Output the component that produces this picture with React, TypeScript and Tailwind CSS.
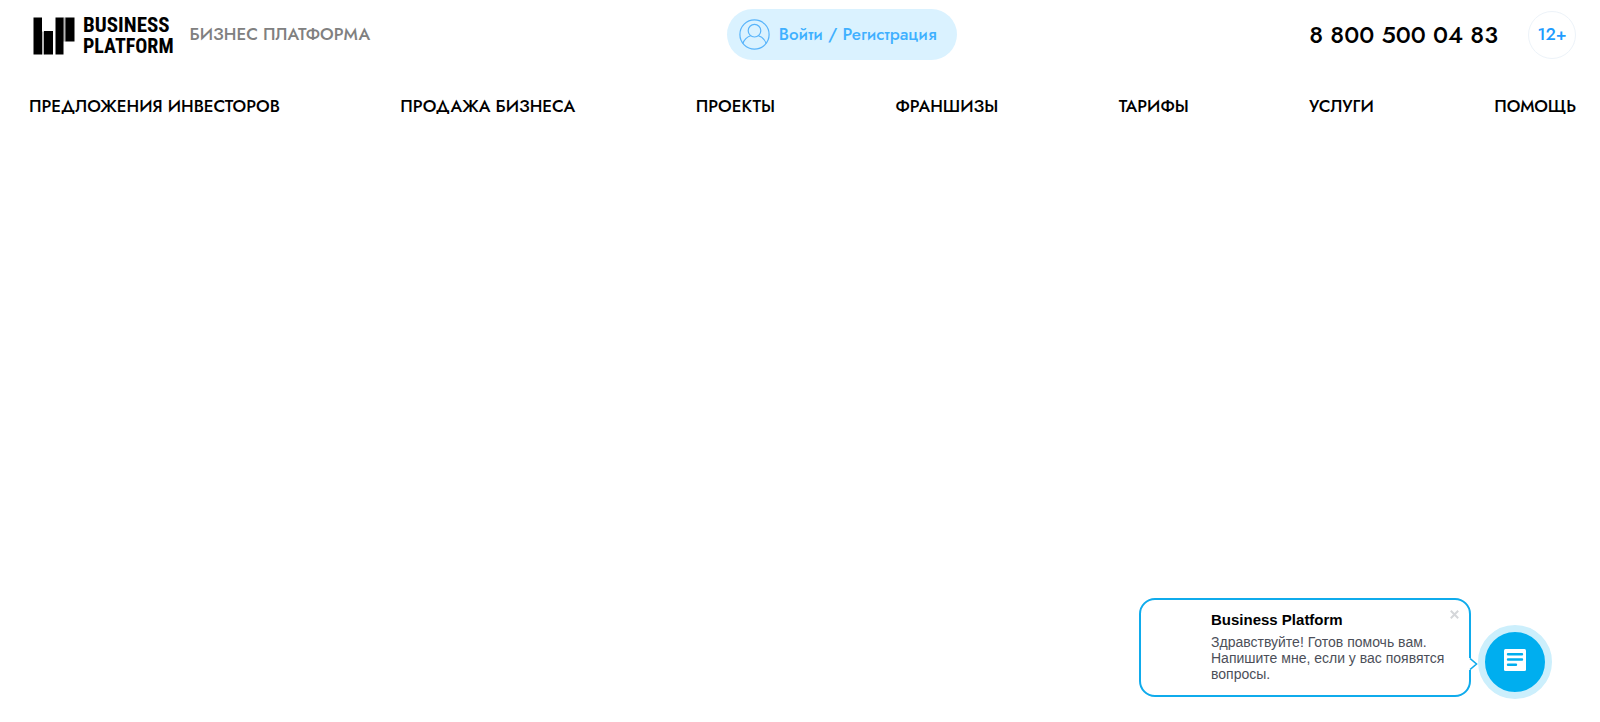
import { useState } from 'react'

const navItems = [
  'Предложения инвесторов',
  'Продажа бизнеса',
  'Проекты',
  'Франшизы',
  'Тарифы',
  'Услуги',
  'Помощь',
]

function Logo() {
  return (
    <a href="#" className="flex items-center gap-2 pt-[2px] text-black">
      <svg className="w-[42px] h-[38px]" viewBox="0 0 42 38" aria-hidden="true">
        <path d="M8.500 14.500h3v23h-3zM30 0.500h3v24h-3z" fill="#b5b5b5" />
        <path d="M0.500 0.500h8.500v37h-8.500zM11 14h9v23.500h-9zM22.500 0.500h8v37h-8zM32.500 0.500h9v24h-9z" fill="currentColor" />
      </svg>
      <span className="flex flex-col leading-[21px] font-bold font-['Roboto_Condensed','Liberation_Sans_Narrow',Roboto,sans-serif]">
        <span className="text-[21px]">BUSINESS</span>
        <span className="text-[20px]">PLATFORM</span>
      </span>
    </a>
  )
}

function UserIcon() {
  return (
    <svg className="w-[31px] h-[31px]" viewBox="0 0 31 31" fill="none" stroke="#58b4fb" strokeWidth="1.2" aria-hidden="true">
      <circle cx="15.5" cy="15.5" r="14.6" />
      <circle cx="15.5" cy="11.7" r="6.3" />
      <path d="M3.800 24.500c1.500-4.200 4.300-6.700 7.900-7.800M27.200 24.500c-1.500-4.200-4.300-6.700-7.900-7.800" />
    </svg>
  )
}

function ChatWidget() {
  const [open, setOpen] = useState(true)

  return (
    <div className="fixed right-12 bottom-[23px] flex items-end gap-[7px] font-['Liberation_Sans',Arial,sans-serif]">
      {open && (
        <div className="relative mb-[2px] w-[332px] rounded-2xl border-2 border-[#0fabec] bg-white pt-[10px] pr-6 pb-[13px] pl-[70px]">
          <h2 className="text-[15px] leading-5 font-bold text-black">Business Platform</h2>
          <p className="mt-1 text-[14px] leading-4 text-[#4c4f59]">
            Здравствуйте! Готов помочь вам. Напишите мне, если у вас появятся вопросы.
          </p>
          <button
            type="button"
            aria-label="Закрыть"
            onClick={() => setOpen(false)}
            className="absolute top-[10px] right-[10px] text-[#d5d7da]"
          >
            <svg className="w-[9px] h-[9px]" viewBox="0 0 9 9" stroke="currentColor" strokeWidth="2">
              <path d="M0.800 0.800l7.400 7.400M8.200 0.800l-7.400 7.400" />
            </svg>
          </button>
          <svg className="absolute -right-[9px] bottom-[25px] w-[9px] h-3" viewBox="0 0 9 12" aria-hidden="true">
            <path d="M0 0h2v12h-2z" fill="#fff" />
            <path d="M1 0.500L7.500 6L1 11.500" fill="#fff" stroke="#0fabec" strokeWidth="1.600" />
          </svg>
        </div>
      )}
      <button
        type="button"
        aria-label="Чат"
        onClick={() => setOpen(!open)}
        className="flex items-center justify-center w-[74px] h-[74px] rounded-full border-[7px] border-[#cceffc] bg-[#00aeef]"
      >
        <svg className="w-[22px] h-[22px] mb-1" viewBox="0 0 22 22" aria-hidden="true">
          <rect width="22" height="22" rx="1.5" fill="#fff" />
          <path d="M4 5.200h14M4 10.500h14M4 15.800h8" stroke="#00aeef" strokeWidth="2.4" strokeLinecap="round" />
        </svg>
      </button>
    </div>
  )
}

export default function App() {
  return (
    <div className="min-h-screen bg-white font-[Jost,Lato,sans-serif]">
      <header className="pl-[29px] pr-6 pt-[9px]">
        <div className="flex items-center justify-between">
          <div className="flex items-center gap-4 pl-1">
            <Logo />
            <span className="pb-[2px] text-[17px] leading-6 font-medium text-[#808080] uppercase">Бизнес платформа</span>
          </div>

          <a
            href="#"
            className="flex items-center gap-[9px] h-[51px] ml-1 pl-3 pr-5 rounded-full bg-[#daf2ff] text-[17px] font-medium text-[#3fb0ff]"
          >
            <UserIcon />
            Войти / Регистрация
          </a>

          <div className="flex items-center gap-[30px]">
            <a href="tel:88005000483" className="text-[24px] leading-8 font-medium text-black">
              8 800 500 04 83
            </a>
            <span className="flex items-center justify-center w-12 h-12 rounded-full border border-[#edf3f9] text-[17px] font-medium text-[#1f9cff]">
              12+
            </span>
          </div>
        </div>

        <nav className="mt-[34px]">
          <ul className="flex items-center justify-between">
            {navItems.map((item) => (
              <li key={item}>
                <a href="#" className="block text-[17px] leading-6 font-medium text-black uppercase">
                  {item}
                </a>
              </li>
            ))}
          </ul>
        </nav>
      </header>

      <ChatWidget />
    </div>
  )
}
